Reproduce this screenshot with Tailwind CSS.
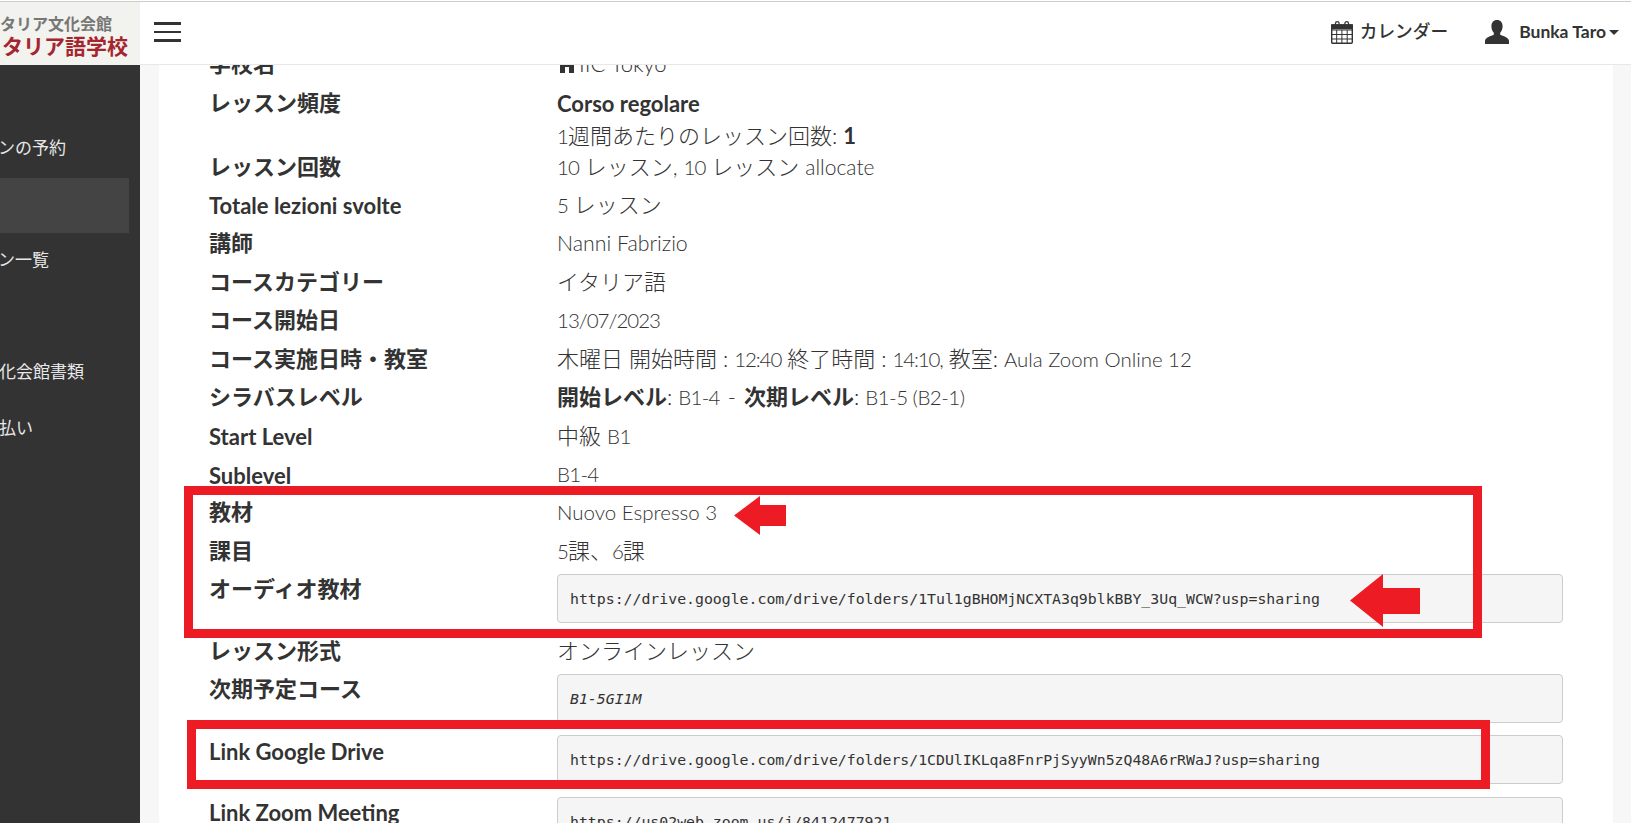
<!DOCTYPE html>
<html lang="ja">
<head>
  <meta charset="UTF-8" />
  <title>IIC Tokyo</title>
  <script src="https://cdn.jsdelivr.net/npm/@tailwindcss/browser@4"></script>
</head>
<body class="h-screen overflow-hidden bg-white text-[#333] font-['Lato','Noto_Sans_CJK_JP',sans-serif]">

  <!-- top bar -->
  <header class="relative z-10 h-[64px] flex bg-white border-t border-[#ccc] mt-px">
    <div class="w-[140px] h-[63px] overflow-hidden bg-[#f2f2ee] font-bold whitespace-nowrap pt-[11px]">
      <div class="text-[16px] leading-[21px] text-[#777]">タリア文化会館</div>
      <div class="text-[21px] leading-[24px] text-[#a5252f] pl-[2px]">タリア語学校</div>
    </div>
    <div class="flex-1 flex items-center border-b border-[#e7e7e7] pb-[2px]">
      <div class="ml-[14px] w-[27px] flex flex-col gap-[6px]">
        <div class="h-[2.5px] bg-[#333]"></div>
        <div class="h-[2.5px] bg-[#333]"></div>
        <div class="h-[2.5px] bg-[#333]"></div>
      </div>
      <div class="ml-auto flex items-center pt-px">
        <svg class="w-[22px] h-[23px]" viewBox="0 0 22 23" fill="none" stroke="#333" stroke-width="1.4">
          <rect x="0.7" y="4" width="20.6" height="18.3" rx="1" />
          <path d="M0.7 9h20.6M0.7 13.5h20.6M0.7 18h20.6M5.7 9v13M10.9 9v13M16.2 9v13" stroke-width="1" />
          <path d="M0.7 4h20.6v3.500H0.7z" fill="#333" />
          <path d="M4.500 6V2.500a1.800 1.800 0 0 1 3.600 0V6M13.900 6V2.500a1.800 1.800 0 0 1 3.600 0V6" stroke-width="1.300" />
        </svg>
        <span class="ml-[7px] text-[17.7px] font-medium">カレンダー</span>
        <svg class="ml-[37px] w-[24px] h-[24px]" viewBox="0 0 24 24" fill="#333">
          <path d="M12 0c3.600 0 5.600 2.700 5.600 6.300 0 2.700-1 5-2.400 6.400v2c2.600 1.300 8.800 2.600 8.800 6.300v3H0v-3c0-3.700 6.200-5 8.800-6.300v-2C7.400 11.300 6.400 9 6.400 6.300 6.400 2.700 8.400 0 12 0z" />
        </svg>
        <span class="ml-[10px] text-[17.5px] font-bold">Bunka Taro</span>
        <span class="ml-[3px] mr-[12px] w-0 h-0 border-x-[5px] border-x-transparent border-t-[5px] border-t-[#333]"></span>
      </div>
    </div>
  </header>

  <div class="flex h-[758px]">
    <!-- side menu -->
    <aside class="w-[140px] shrink-0 overflow-hidden bg-[#333] text-[#e8e8e8] text-[17px] whitespace-nowrap pt-[70px]">
      <div class="h-[43px] leading-[26px] -ml-[2px]">ンの予約</div>
      <div class="h-[55px] w-[129px] bg-[#444]"></div>
      <div class="mt-[14px] h-[112px] leading-[26px] -ml-[2px]">ン一覧</div>
      <div class="h-[56px] leading-[26px] -ml-[1px]">化会館書類</div>
      <div class="leading-[26px] -ml-[1px]">払い</div>
    </aside>

    <!-- course detail -->
    <main class="flex-1 bg-[#f7f7f7] pl-[19px] pr-[18px] overflow-hidden">
      <div class="relative h-[800px] bg-white pl-[50px] pr-[50px] text-[22px] -mt-[20px]">

        <div class="flex h-[38px] leading-[38px]">
          <div class="w-[348px] font-bold">学校名</div>
          <div class="font-light flex items-center gap-[2px]">
            <svg class="w-[20px] h-[18px]" viewBox="0 0 20 18" fill="#333"><path d="M10 0 0 9h3v9h5v-6h4v6h5V9h3z" /></svg>
            IIC Tokyo
          </div>
        </div>
        <div class="flex h-[64.500px] leading-[32px] pt-[4px]">
          <div class="w-[348px] font-bold">レッスン頻度</div>
          <div class="font-light pt-[1px]">
            <div class="font-bold">Corso regolare</div>
            <div><span class="text-[20.5px] tracking-[-1px]">1</span>週間あたりのレッスン回数: <span class="font-bold">1</span></div>
          </div>
        </div>
        <div class="flex h-[38.440px] leading-[38px]">
          <div class="w-[348px] font-bold">レッスン回数</div>
          <div class="font-light"><span class="text-[20.5px] tracking-[-1px]">10</span> レッスン, <span class="text-[20.5px] tracking-[-1px]">10</span> レッスン <span class="text-[21px]">allocate</span></div>
        </div>
        <div class="flex h-[38.440px] leading-[38px]">
          <div class="w-[348px] font-bold pt-px">Totale lezioni svolte</div>
          <div class="font-light"><span class="text-[20.5px] tracking-[-1px]">5</span> レッスン</div>
        </div>
        <div class="flex h-[38.440px] leading-[38px]">
          <div class="w-[348px] font-bold">講師</div>
          <div class="font-light text-[21.3px]">Nanni Fabrizio</div>
        </div>
        <div class="flex h-[38.440px] leading-[38px]">
          <div class="w-[348px] font-bold">コースカテゴリー</div>
          <div class="font-light">イタリア語</div>
        </div>
        <div class="flex h-[38.440px] leading-[38px]">
          <div class="w-[348px] font-bold">コース開始日</div>
          <div class="font-light text-[20.5px] tracking-[-1px]">13/07/2023</div>
        </div>
        <div class="flex h-[38.440px] leading-[38px]">
          <div class="w-[348px] font-bold">コース実施日時・教室</div>
          <div class="font-light">木曜日 開始時間 : <span class="text-[20.5px] tracking-[-1.100px]">12:40</span> 終了時間 : <span class="text-[20.5px] tracking-[-1.100px]">14:10,</span> 教室: <span class="text-[20.4px]">Aula Zoom Online 12</span></div>
        </div>
        <div class="flex h-[38.440px] leading-[38px]">
          <div class="w-[348px] font-bold">シラバスレベル</div>
          <div class="font-light"><span class="font-bold">開始レベル</span>: <span class="text-[20.5px] tracking-[-0.700px]">B1-4</span><span class="mx-[8px]">-</span><span class="font-bold">次期レベル</span>: <span class="text-[20.5px] tracking-[-0.500px]">B1-5 (B2-1)</span></div>
        </div>
        <div class="flex h-[38.440px] leading-[38px]">
          <div class="w-[348px] font-bold pt-px">Start Level</div>
          <div class="font-light">中級 <span class="text-[20.5px] tracking-[-0.500px]">B1</span></div>
        </div>
        <div class="flex h-[38.440px] leading-[38px]">
          <div class="w-[348px] font-bold pt-[2px]">Sublevel</div>
          <div class="font-light text-[20.5px] tracking-[-0.700px]">B1-4</div>
        </div>
        <div class="flex h-[38.440px] leading-[38px]">
          <div class="w-[348px] font-bold">教材</div>
          <div class="font-light text-[20.5px]">Nuovo Espresso 3</div>
        </div>
        <div class="flex h-[38.440px] leading-[38px]">
          <div class="w-[348px] font-bold">課目</div>
          <div class="font-light"><span class="text-[20.5px] tracking-[-1px]">5</span>課、<span class="text-[20.5px] tracking-[-1px]">6</span>課</div>
        </div>
        <div class="flex h-[62px] leading-[38px]">
          <div class="w-[348px] shrink-0 font-bold">オーディオ教材</div>
          <pre class="flex-1 h-[49px] mt-[4px] px-[12px] leading-[47px] text-[14.830px] font-['DejaVu_Sans_Mono',monospace] bg-[#f5f5f5] border border-[#ccc] rounded-[4px]">https://drive.google.com/drive/folders/1Tul1gBHOMjNCXTA3q9blkBBY_3Uq_WCW?usp=sharing</pre>
        </div>
        <div class="flex h-[38px] leading-[38px]">
          <div class="w-[348px] font-bold">レッスン形式</div>
          <div class="font-light">オンラインレッスン</div>
        </div>
        <div class="flex h-[63px] leading-[38px]">
          <div class="w-[348px] shrink-0 font-bold">次期予定コース</div>
          <pre class="flex-1 h-[49px] mt-[4px] px-[12px] leading-[47px] text-[14.830px] italic font-['DejaVu_Sans_Mono',monospace] bg-[#f5f5f5] border border-[#ccc] rounded-[4px]">B1-5GI1M</pre>
        </div>
        <div class="flex h-[61px] leading-[38px]">
          <div class="w-[348px] shrink-0 font-bold">Link Google Drive</div>
          <pre class="flex-1 h-[49px] mt-[2px] px-[12px] leading-[47px] text-[14.830px] font-['DejaVu_Sans_Mono',monospace] bg-[#f5f5f5] border border-[#ccc] rounded-[4px]">https://drive.google.com/drive/folders/1CDUlIKLqa8FnrPjSyyWn5zQ48A6rRWaJ?usp=sharing</pre>
        </div>
        <div class="flex h-[61px] leading-[38px]">
          <div class="w-[348px] shrink-0 font-bold">Link Zoom Meeting</div>
          <pre class="flex-1 h-[49px] mt-[3px] px-[12px] leading-[47px] text-[14.830px] font-['DejaVu_Sans_Mono',monospace] bg-[#f5f5f5] border border-[#ccc] rounded-[4px]">https://us02web.zoom.us/j/8412477921</pre>
        </div>
      </div>
    </main>
  </div>

  <!-- red annotations drawn over the screenshot -->
  <div class="absolute z-20 left-[184px] top-[486px] w-[1298px] h-[152px] border-[9px] border-[#ed1c24]"></div>
  <div class="absolute z-20 left-[187px] top-[720px] w-[1303px] h-[69px] border-[9px] border-[#ed1c24]"></div>
  <svg class="absolute z-20 left-[734px] top-[496px] w-[52px] h-[39px]" viewBox="0 0 52 39" fill="#ed1c24"><path d="M0 19.500 26 0v9h26v21H26v9z" /></svg>
  <svg class="absolute z-20 left-[1350px] top-[574px] w-[70px] h-[53px]" viewBox="0 0 70 53" fill="#ed1c24"><path d="M0 26.500 33 0v14h37v26H33v13z" /></svg>

</body>
</html>
